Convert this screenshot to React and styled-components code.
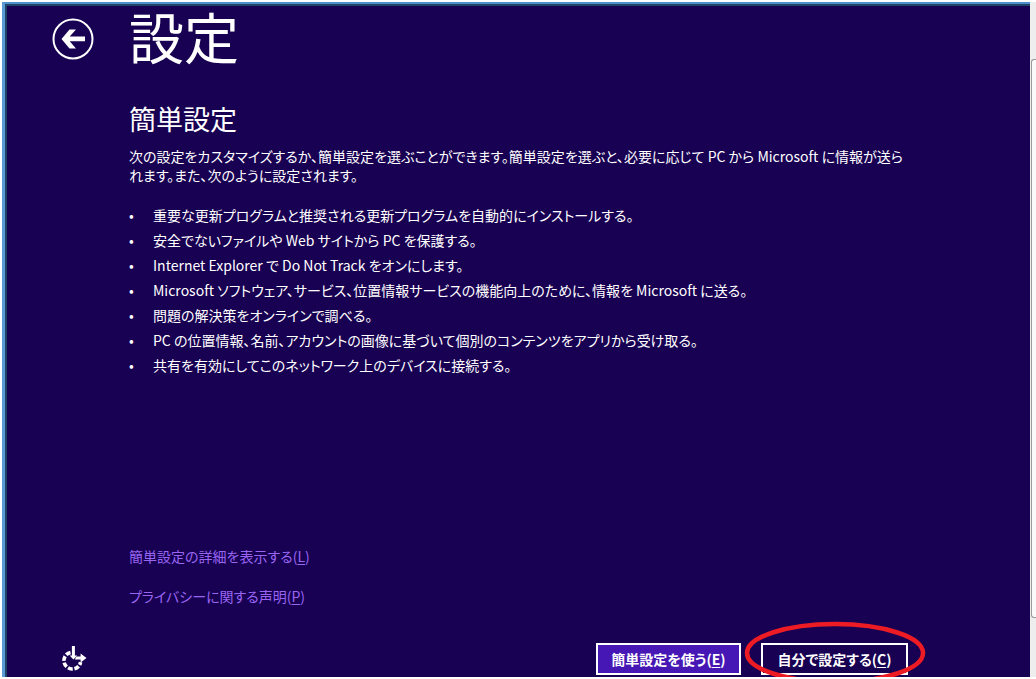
import React from 'react';
import styled, { createGlobalStyle } from 'styled-components';

const GlobalStyle = createGlobalStyle`
  *, *::before, *::after { box-sizing: border-box; }
  body {
    margin: 0;
    background: #ffffff;
    color: #ffffff;
    font-family: "Noto Sans CJK JP", sans-serif;
    font-size: 14px;
    line-height: 20px;
    font-feature-settings: "palt";
  }
`;

const Desktop = styled.div`
  display: flex;
  min-height: 100vh;
  padding: 2px 0 2px 2px;
`;

const Screen = styled.div`
  flex: 1;
  display: flex;
  border-top: 2px solid #4f8fcc;
  border-left: 3px solid #5b9bd5;
`;

const Setup = styled.main`
  flex: 1;
  display: grid;
  grid-template-columns: 122px 1fr;
  grid-template-rows: auto 1fr auto;
  border-top: 2px solid #1f4468;
  border-left: 2px solid #1f4468;
  background: #180052;
`;

const Gutter = styled.aside`
  display: flex;
  flex-direction: column;
  width: 6px;
  background: #eeeeee;
`;

const GutterPanel = styled.div`
  flex: 1;
  margin: 57px 0 59px 1px;
  border: 1px solid #9a9a9a;
  border-right: 0;
  border-radius: 3px 0 0 3px;
  background: #fafafa;
`;

const BackButton = styled.button`
  justify-self: start;
  align-self: start;
  width: 42px;
  height: 42px;
  margin: 12px 0 0 45px;
  padding: 0;
  border: 0;
  background: none;
  color: inherit;
  svg { display: block; }
`;

const Title = styled.h1`
  margin: 0;
  font-size: 55px;
  line-height: 58px;
  font-weight: 400;
`;

const Body = styled.section`
  grid-column: 2;
  display: flex;
  flex-direction: column;
  padding: 39px 122px 0 0;
`;

const Heading = styled.h2`
  margin: 0 0 12px;
  font-size: 27px;
  line-height: 32px;
  font-weight: 400;
`;

const Intro = styled.p`
  margin: 0 0 18px;
  line-height: 19px;
`;

const Options = styled.ul`
  margin: 0;
  padding: 0;
  list-style: none;
`;

const Option = styled.li`
  display: grid;
  grid-template-columns: 24px 1fr;
  line-height: 25px;
  &::before { content: "•"; }
`;

const Links = styled.nav`
  display: flex;
  flex-direction: column;
  align-items: flex-start;
  gap: 20px;
  margin-top: auto;
  padding-bottom: 37px;
`;

const TextLink = styled.a`
  color: #9966f2;
  text-decoration: none;
`;

const Key = styled.u`
  text-underline-offset: 2px;
`;

const EaseButton = styled(BackButton)`
  width: 26px;
  height: 26px;
  margin: 3px 0 0 54px;
`;

const Actions = styled.footer`
  display: flex;
  justify-content: flex-end;
  gap: 20px;
  padding: 0 122px 2px 0;
`;

const ActionButton = styled.button`
  width: ${(p) => (p.$primary ? 145 : 147)}px;
  height: 32px;
  padding: 0;
  border: 2px solid #ffffff;
  background: ${(p) => (p.$primary ? '#4617b4' : 'transparent')};
  color: #ffffff;
  font: inherit;
  font-weight: 700;
  font-feature-settings: inherit;
  white-space: nowrap;
`;

const Marked = styled.div`
  position: relative;
`;

const Ring = styled.svg`
  position: absolute;
  left: -17px;
  top: -22px;
  pointer-events: none;
`;

const options = [
  '重要な更新プログラムと推奨される更新プログラムを自動的にインストールする。',
  '安全でないファイルや Web サイトから PC を保護する。',
  'Internet Explorer で Do Not Track をオンにします。',
  'Microsoft ソフトウェア、サービス、位置情報サービスの機能向上のために、情報を Microsoft に送る。',
  '問題の解決策をオンラインで調べる。',
  'PC の位置情報、名前、アカウントの画像に基づいて個別のコンテンツをアプリから受け取る。',
  '共有を有効にしてこのネットワーク上のデバイスに接続する。',
];

const BackIcon = () => (
  <svg width="42" height="42" viewBox="0 0 42 42" aria-hidden="true">
    <circle cx="21" cy="21" r="19.5" fill="none" stroke="#fff" strokeWidth="2" />
    <path d="M9.5 21 17.5 11.5H24L17.7 18.5H33V23.3H17.7L24 30.5H17.5Z" fill="#fff" />
  </svg>
);

const EaseIcon = () => (
  <svg width="26" height="26" viewBox="0 0 26 26" aria-hidden="true">
    <path
      d="M9.5 6.4A8.4 8.4 0 1 0 19.6 16.2"
      fill="none"
      stroke="#fff"
      strokeWidth="3.6"
      strokeDasharray="4.9 1.7"
    />
    <path d="M10.9 0H13.9V9.5H16.2L12.4 13.6 8.6 9.5H10.9Z" fill="#fff" />
    <path d="M15.4 10.4H19.6V7.4L25.5 12 19.6 16.4V13.5H13.8Z" fill="#fff" />
  </svg>
);

export default function App() {
  return (
    <>
      <GlobalStyle />
      <Desktop>
        <Screen>
          <Setup lang="ja">
            <BackButton type="button" aria-label="戻る">
              <BackIcon />
            </BackButton>
            <Title>設定</Title>
            <Body>
              <Heading>簡単設定</Heading>
              <Intro>
                次の設定をカスタマイズするか、簡単設定を選ぶことができます。簡単設定を選ぶと、必要に応じて PC から Microsoft に情報が送られます。また、次のように設定されます。
              </Intro>
              <Options>
                {options.map((text) => (
                  <Option key={text}>{text}</Option>
                ))}
              </Options>
              <Links>
                <TextLink href="#details">
                  簡単設定の詳細を表示する(<Key>L</Key>)
                </TextLink>
                <TextLink href="#privacy">
                  プライバシーに関する声明(<Key>P</Key>)
                </TextLink>
              </Links>
            </Body>
            <EaseButton type="button" aria-label="簡単操作">
              <EaseIcon />
            </EaseButton>
            <Actions>
              <ActionButton type="button" $primary>
                簡単設定を使う(<Key>E</Key>)
              </ActionButton>
              <Marked>
                <ActionButton type="button">
                  自分で設定する(<Key>C</Key>)
                </ActionButton>
                <Ring width="182" height="56" viewBox="0 0 182 56" aria-hidden="true">
                  <ellipse cx="91" cy="32" rx="88" ry="29" fill="none" stroke="#ed1c24" strokeWidth="4.5" />
                </Ring>
              </Marked>
            </Actions>
          </Setup>
        </Screen>
        <Gutter>
          <GutterPanel />
        </Gutter>
      </Desktop>
    </>
  );
}
